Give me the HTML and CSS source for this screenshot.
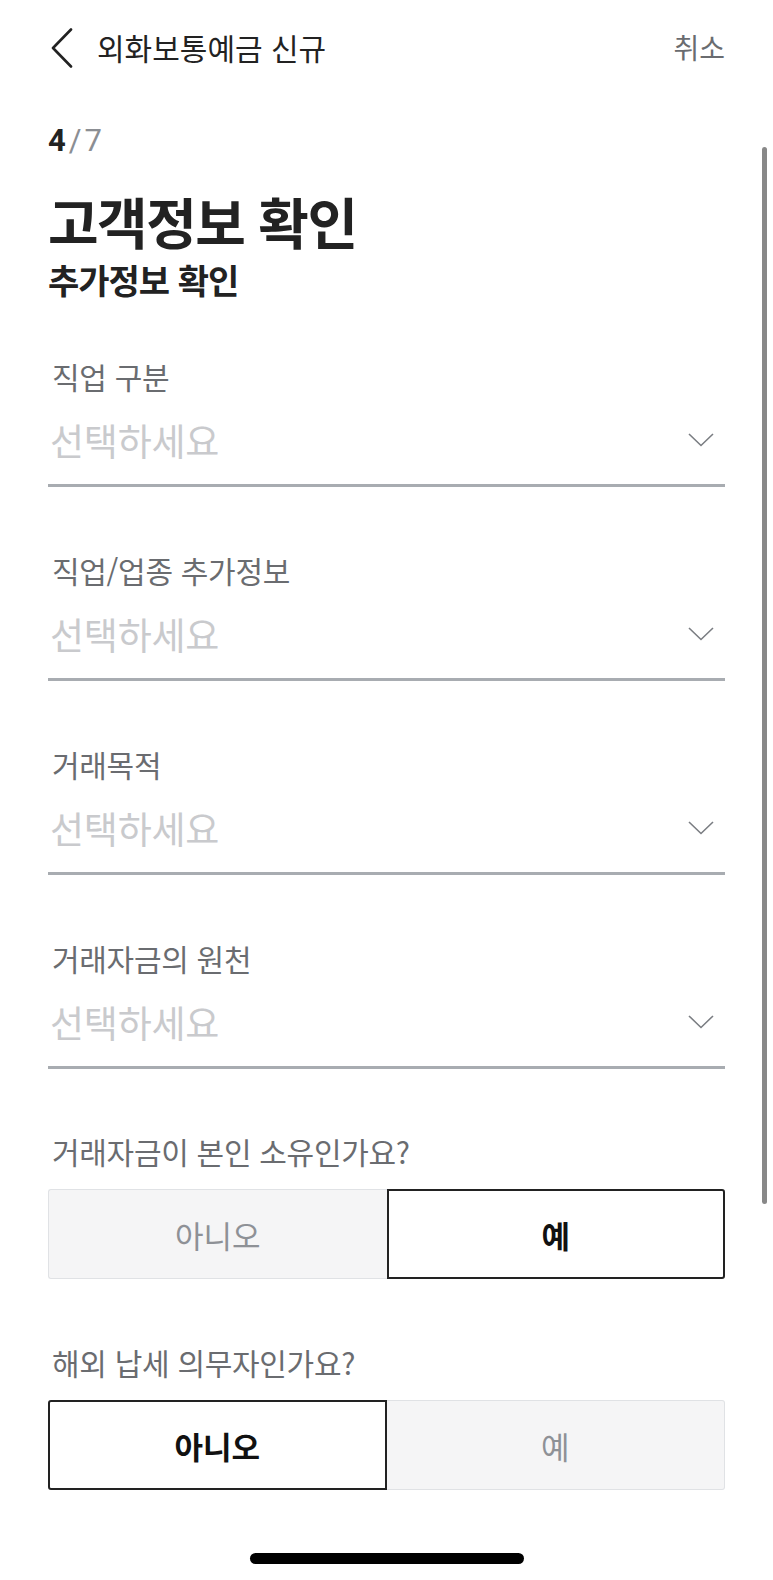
FILE: index.html
```html
<!DOCTYPE html>
<html lang="ko">
<head>
<meta charset="utf-8">
<title>외화보통예금 신규</title>
<link rel="stylesheet" href="styles.css">
</head>
<body>
<div class="screen">
  <header class="topbar">
    <div class="topbar-left">
      <svg class="back" width="24" height="40" viewBox="0 0 24 40"><path d="M21 1.5 L3 20 L21 38.5" fill="none" stroke="#222" stroke-width="2.6" stroke-linecap="round" stroke-linejoin="round"/></svg>
      <span class="topbar-title">외화보통예금 신규</span>
    </div>
    <span class="cancel">취소</span>
  </header>

  <main class="content">
    <div class="step"><b>4</b><span class="step-total">/7</span></div>
    <div class="heading">
      <h1 class="title">고객정보 확인</h1>
      <h2 class="subtitle">추가정보 확인</h2>
    </div>

    <div class="fields">
      <div class="field">
        <div class="label">직업 구분</div>
        <div class="select"><span class="placeholder">선택하세요</span><svg class="chev" width="26" height="14" viewBox="0 0 26 14"><path d="M1 1 L13 12.5 L25 1" fill="none" stroke="#7a7d82" stroke-width="1.6"/></svg></div>
      </div>
      <div class="field">
        <div class="label">직업/업종 추가정보</div>
        <div class="select"><span class="placeholder">선택하세요</span><svg class="chev" width="26" height="14" viewBox="0 0 26 14"><path d="M1 1 L13 12.5 L25 1" fill="none" stroke="#7a7d82" stroke-width="1.6"/></svg></div>
      </div>
      <div class="field">
        <div class="label">거래목적</div>
        <div class="select"><span class="placeholder">선택하세요</span><svg class="chev" width="26" height="14" viewBox="0 0 26 14"><path d="M1 1 L13 12.5 L25 1" fill="none" stroke="#7a7d82" stroke-width="1.6"/></svg></div>
      </div>
      <div class="field">
        <div class="label">거래자금의 원천</div>
        <div class="select"><span class="placeholder">선택하세요</span><svg class="chev" width="26" height="14" viewBox="0 0 26 14"><path d="M1 1 L13 12.5 L25 1" fill="none" stroke="#7a7d82" stroke-width="1.6"/></svg></div>
      </div>
      <div class="field field-q">
        <div class="label">거래자금이 본인 소유인가요?</div>
        <div class="toggle">
          <button class="opt">아니오</button>
          <button class="opt on">예</button>
        </div>
      </div>
      <div class="field">
        <div class="label">해외 납세 의무자인가요?</div>
        <div class="toggle">
          <button class="opt on">아니오</button>
          <button class="opt">예</button>
        </div>
      </div>
    </div>
  </main>

  <div class="home-indicator"></div>
  <div class="scrollbar"></div>
</div>
</body>
</html>
```

FILE: styles.css
```css
* { box-sizing: border-box; margin: 0; padding: 0; }
html, body { background: #fff; }
body {
  font-family: "Noto Sans CJK KR", "Noto Sans", sans-serif;
  color: #222;
}
.screen {
  position: relative;
  width: 773px;
  height: 1580px;
  overflow: hidden;
  display: flex;
  flex-direction: column;
}
.topbar {
  height: 94px;
  padding: 0 48px 0 50px;
  display: flex;
  align-items: center;
  justify-content: space-between;
}
.topbar-left { display: flex; align-items: center; gap: 23px; }
.back { display: block; margin-top: 2px; }
.topbar-title {
  font-size: 30px;
  line-height: 38px;
  letter-spacing: 0;
  color: #222;
}
.cancel {
  font-size: 28px;
  line-height: 38px;
  color: #6a6c70;
  letter-spacing: 0;
}
.content {
  padding: 0 48px;
}
.step {
  margin-top: 29px;
  font-family: "Roboto", "Noto Sans", sans-serif;
  font-size: 31px;
  line-height: 36px;
  letter-spacing: 3px;
}
.step b { font-weight: 700; color: #222; }
.step-total { color: #8b8e93; font-weight: 400; }
.heading {
  margin-top: 33px;
  display: flex;
  flex-direction: column;
  gap: 11px;
}
.title {
  font-size: 55px;
  line-height: 56px;
  font-weight: 700;
  letter-spacing: -1.5px;
  color: #222;
}
.subtitle {
  font-size: 34px;
  line-height: 42px;
  font-weight: 700;
  letter-spacing: -1px;
  color: #222;
}
.fields {
  margin-top: 58px;
  display: flex;
  flex-direction: column;
  gap: 66px;
}
.field { display: flex; flex-direction: column; }
.field-q { margin-top: -1px; }
.label {
  font-size: 30px;
  line-height: 34px;
  color: #6a6c70;
  letter-spacing: -0.3px;
  padding-left: 4px;
}
.select {
  margin-top: 25px;
  display: flex;
  align-items: center;
  justify-content: space-between;
  padding: 0 11px 22px 2px;
  border-bottom: 3px solid #a8acb1;
}
.placeholder {
  font-size: 37px;
  line-height: 44px;
  color: #c9cacd;
  letter-spacing: -0.2px;
}
.chev { display: block; }
.toggle {
  margin-top: 21px;
  display: grid;
  grid-template-columns: 1fr 1fr;
  height: 90px;
}
.opt {
  font-family: "Noto Sans CJK KR", "Noto Sans", sans-serif;
  font-size: 31px;
  letter-spacing: 0;
  background: #f5f5f6;
  border: 1.5px solid #e0e2e5;
  color: #8e9196;
  font-weight: 400;
  border-radius: 3px;
}
.toggle .opt:first-child { border-right: none; border-radius: 3px 0 0 3px; }
.toggle .opt:last-child { border-left: none; border-radius: 0 3px 3px 0; }
.toggle .opt.on {
  background: #fff;
  border: 2px solid #222;
  color: #111;
  font-weight: 700;
}
.home-indicator {
  margin: auto auto 16px auto;
  width: 274px;
  height: 11px;
  border-radius: 6px;
  background: #000;
}
.scrollbar {
  position: absolute;
  left: 762px;
  top: 147px;
  width: 5px;
  height: 1057px;
  border-radius: 3px;
  background: #888;
}
```
